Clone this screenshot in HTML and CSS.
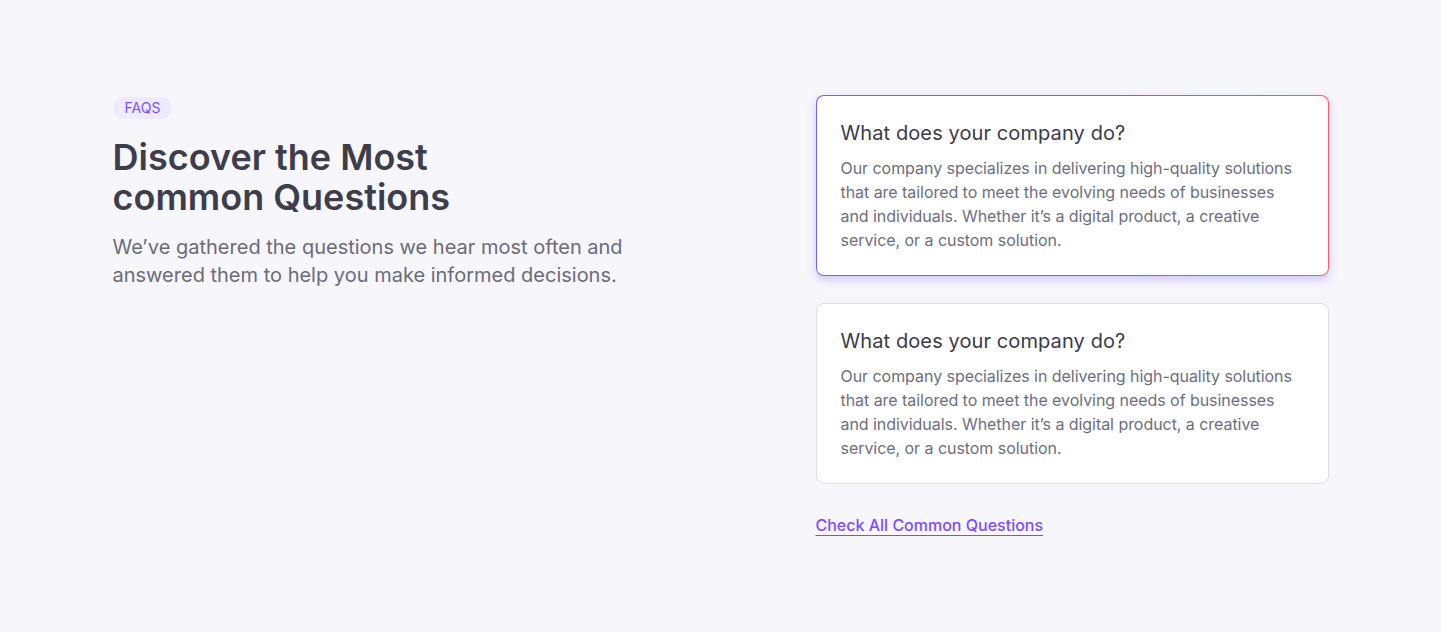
FILE: index.html
```html
<!DOCTYPE html>
<html lang="en">
<head>
<meta charset="utf-8">
<title>FAQs</title>
<link rel="stylesheet" href="styles.css">
</head>
<body>
<section class="faq">
  <div class="intro">
    <span class="badge">FAQS</span>
    <h1 class="title">Discover the Most<br>common Questions</h1>
    <p class="lead">We’ve gathered the questions we hear most often and<br>answered them to help you make informed decisions.</p>
  </div>
  <div class="list">
    <article class="card card--active">
      <h2 class="q">What does your company do?</h2>
      <p class="a">Our company specializes in delivering high-quality solutions that are tailored to meet the evolving needs of businesses and individuals. Whether it’s a digital product, a creative service, or a custom solution.</p>
    </article>
    <article class="card">
      <h2 class="q">What does your company do?</h2>
      <p class="a">Our company specializes in delivering high-quality solutions that are tailored to meet the evolving needs of businesses and individuals. Whether it’s a digital product, a creative service, or a custom solution.</p>
    </article>
    <a class="more" href="#">Check All Common Questions</a>
  </div>
</section>
</body>
</html>
```
FILE: styles.css
```css
* { box-sizing: border-box; }
html, body { margin: 0; }
body {
  background: #f7f6fb;
  font-family: Inter, "Noto Sans", sans-serif;
  color: #3c3c4b;
}
.faq {
  width: 1216px;
  margin: 0 auto;
  padding-top: 95px;
  display: grid;
  grid-template-columns: 1fr 513px;
  align-items: start;
}
.intro {
  display: flex;
  flex-direction: column;
  align-items: flex-start;
  padding-top: 2px;
}
.badge {
  display: inline-block;
  height: 22px;
  line-height: 22px;
  padding: 0 12px;
  border-radius: 11px;
  background: #efebfe;
  color: #7c4dff;
  font-size: 14px;
}
.title {
  margin: 18px 0 0;
  font-size: 36px;
  line-height: 40px;
  font-weight: 600;
  color: #3d3d4c;
}
.lead {
  margin: 16px 0 0;
  font-size: 20px;
  line-height: 28px;
  color: #6b6b79;
}
.list {
  display: flex;
  flex-direction: column;
  align-items: flex-start;
}
.card {
  width: 100%;
  height: 181px;
  padding: 23px 24px;
  background: #fff;
  border: 1px solid #dcdce3;
  border-radius: 8px;
  margin-bottom: 27px;
}
.card--active {
  border: 1px solid transparent;
  background:
    linear-gradient(#fff, #fff) padding-box,
    linear-gradient(90deg, #7b5cff 0%, #7b5cff 62%, #ff4a55 72%, #ff5a60 100%) border-box;
  box-shadow: 0 4px 10px rgba(124, 92, 255, 0.3);
}
.q {
  margin: 0;
  font-size: 20px;
  line-height: 28px;
  font-weight: 400;
  color: #3b3b4a;
  letter-spacing: 0.1px;
}
.a {
  margin: 9px 0 0;
  font-size: 16px;
  line-height: 24px;
  color: #6e6e7c;
  letter-spacing: -0.05px;
}
.more {
  margin-top: 2px;
  font-size: 16px;
  line-height: 24px;
  font-weight: 500;
  color: #7c4dff;
  text-decoration: underline;
  text-underline-offset: 4px;
  text-decoration-thickness: 1px;
}
```
